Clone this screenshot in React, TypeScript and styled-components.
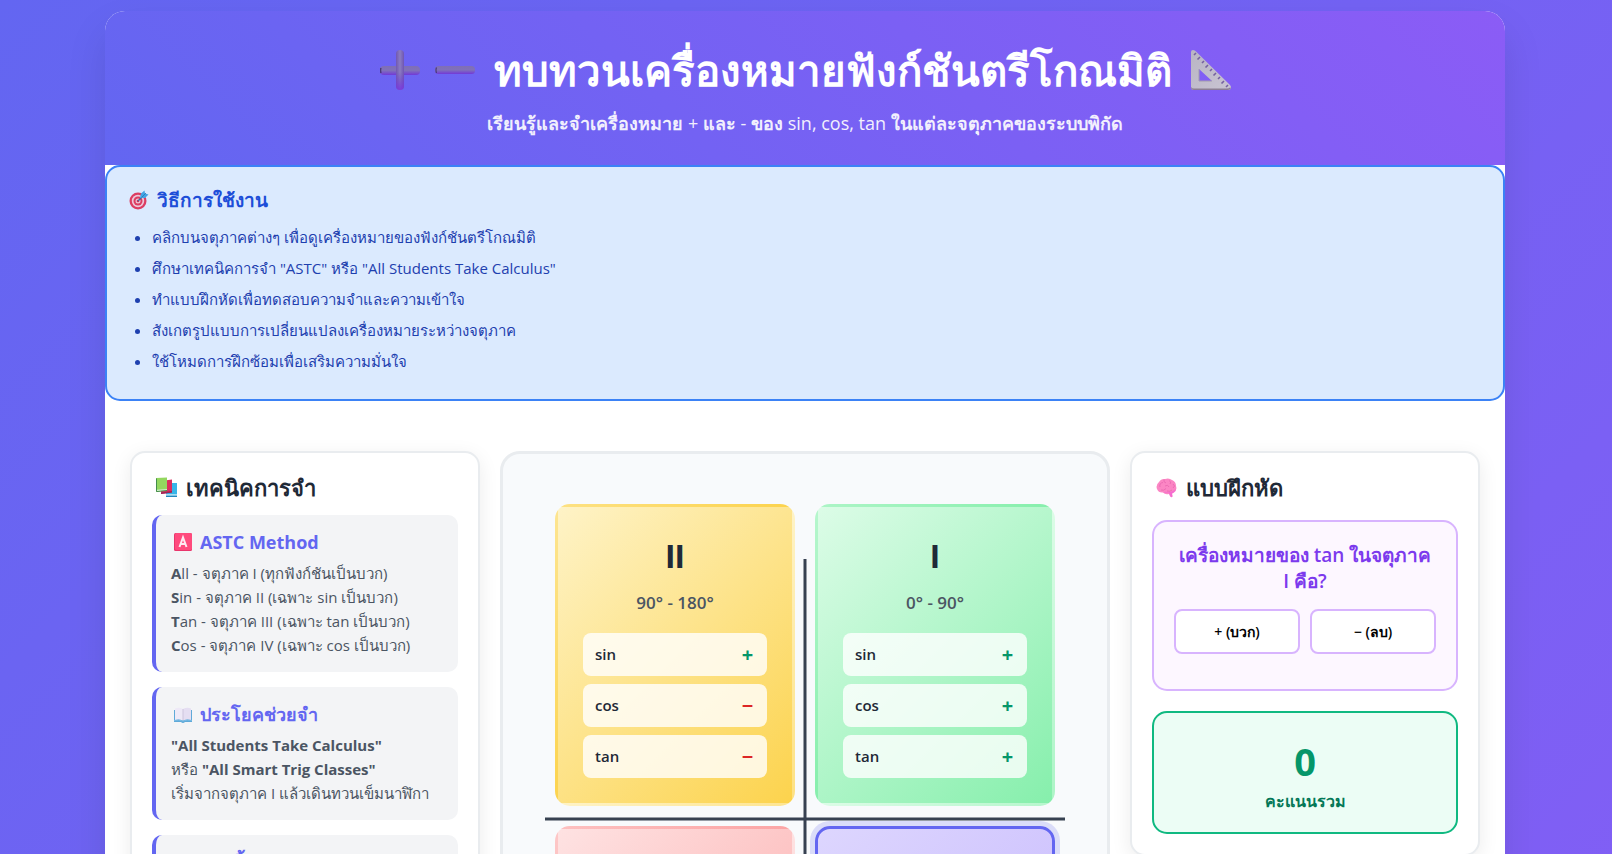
import React, { useState } from "react";
import styled, { createGlobalStyle } from "styled-components";

const GlobalStyle = createGlobalStyle`
  * { box-sizing: border-box; margin: 0; padding: 0; }
  body {
    font-family: "Open Sans", "Noto Sans", sans-serif;
    background: linear-gradient(135deg, #6366f1 0%, #8b5cf6 120%);
    color: #1f2937;
    padding: 11px 21px 11px 19px;
  }
`;

const Container = styled.div`
  max-width: 1400px;
  margin: 0 auto;
  background: #fff;
  border-radius: 20px;
  box-shadow: 0 20px 40px rgba(0, 0, 0, 0.1);
  overflow: hidden;
`;

const Header = styled.header`
  display: flex;
  flex-direction: column;
  align-items: center;
  padding: 30px 30px 27px;
  background: linear-gradient(45deg, #6366f1, #8b5cf6);
  color: #fff;
  text-align: center;
`;

const Title = styled.h1`
  display: flex;
  align-items: center;
  gap: 19px;
  font-size: 42px;
  line-height: 58px;
  font-weight: 700;
`;

const TitleSigns = styled.span`
  display: flex;
  gap: 15px;
`;

const Subtitle = styled.p`
  margin-top: 9px;
  font-size: 18px;
  line-height: 30px;
  font-weight: 600;
  opacity: 0.9;
`;

const Formula = styled.span`
  font-weight: 400;
`;

const Instructions = styled.section`
  padding: 20px 22px 22px;
  border: 2px solid #3b82f6;
  border-radius: 15px;
  background: #dbeafe;
  color: #1e40af;
`;

const InstructionsTitle = styled.h2`
  display: flex;
  align-items: center;
  gap: 8px;
  font-size: 19px;
  line-height: 26px;
  font-weight: 700;
  color: #1d4ed8;
`;

const InstructionList = styled.ul`
  margin-top: 9px;
  padding-left: 23px;
  font-size: 15px;
  line-height: 31px;
`;

const Main = styled.main`
  display: grid;
  grid-template-columns: 350px minmax(0, 1fr) 350px;
  align-items: start;
  gap: 20px;
  padding: 50px 25px 25px;
`;

const Card = styled.section`
  padding: 20px;
  border: 2px solid #e9ecef;
  border-radius: 15px;
  background: #fff;
  box-shadow: 0 5px 20px rgba(0, 0, 0, 0.08);
`;

const CardTitle = styled.h2<{ $space: number }>`
  display: flex;
  align-items: center;
  gap: 9px;
  margin-bottom: ${(p) => p.$space}px;
  padding-left: 4px;
  font-size: 22px;
  line-height: 28px;
  font-weight: 600;
`;

const MemoryList = styled.div`
  display: grid;
  gap: 15px;
`;

const MemoryBox = styled.article`
  padding: 15px;
  border-left: 4px solid #6366f1;
  border-radius: 10px;
  background: #f3f4f6;
  color: #4b5563;
  font-size: 15px;
  line-height: 24px;
`;

const MemoryTitle = styled.h3`
  display: flex;
  align-items: center;
  gap: 8px;
  margin-bottom: 7px;
  padding-left: 3px;
  font-size: 18px;
  line-height: 24px;
  font-weight: 700;
  color: #6366f1;
`;

const PlanePanel = styled.section`
  display: flex;
  justify-content: center;
  padding: 50px 20px;
  border: 3px solid #e9ecef;
  border-radius: 20px;
  background: #f8fafc;
`;

const Plane = styled.div`
  position: relative;
  display: grid;
  grid-template-columns: 1fr 1fr;
  grid-template-rows: auto 1fr;
  gap: 20px;
  width: 100%;
  max-width: 500px;
  min-height: 629px;
`;

const Axis = styled.span<{ $vertical?: boolean }>`
  position: absolute;
  top: 50%;
  left: 50%;
  width: ${(p) => (p.$vertical ? "3px" : "520px")};
  height: ${(p) => (p.$vertical ? "520px" : "3px")};
  background: #374151;
  transform: translate(-50%, -50%);
`;

const Quadrant = styled.button<{ $from: string; $to: string; $active: boolean }>`
  position: relative;
  display: flex;
  flex-direction: column;
  align-items: center;
  padding: 25px;
  border: 3px solid ${(p) => (p.$active ? "#6366f1" : "transparent")};
  border-radius: 15px;
  background: linear-gradient(135deg, ${(p) => p.$from}, ${(p) => p.$to});
  box-shadow: ${(p) => (p.$active ? "0 0 0 5px rgba(99, 102, 241, 0.2)" : "none")};
  font-family: inherit;
  color: #1f2937;
  cursor: pointer;
`;

const Numeral = styled.span`
  font-family: "Liberation Sans", sans-serif;
  font-size: 34px;
  line-height: 48px;
  font-weight: 700;
`;

const AngleRange = styled.span`
  margin: 8px 0 16px;
  font-size: 17px;
  line-height: 29px;
  font-weight: 600;
  color: #4b5563;
`;

const SignRows = styled.span`
  display: grid;
  gap: 8px;
  width: 100%;
`;

const SignRow = styled.span`
  display: flex;
  align-items: center;
  justify-content: space-between;
  padding: 8px 12px;
  border-radius: 8px;
  background: rgba(255, 255, 255, 0.8);
  font-size: 15px;
  line-height: 27px;
  font-weight: 600;
`;

const Sign = styled.span<{ $positive: boolean }>`
  width: 15px;
  font-size: 20px;
  font-weight: 700;
  text-align: center;
  color: ${(p) => (p.$positive ? "#059669" : "#dc2626")};
`;

const QuizBox = styled.div`
  min-height: 171px;
  padding: 20px;
  border: 2px solid #d8b4fe;
  border-radius: 15px;
  background: #fdf7ff;
`;

const Question = styled.p`
  margin-bottom: 15px;
  font-size: 19px;
  line-height: 26px;
  font-weight: 600;
  text-align: center;
  color: #7c3aed;
`;

const Answers = styled.div`
  display: grid;
  grid-template-columns: 1fr 1fr;
  gap: 10px;
`;

const AnswerButton = styled.button`
  padding: 10px;
  border: 2px solid #d8b4fe;
  border-radius: 8px;
  background: #fff;
  color: #000;
  font-family: inherit;
  font-size: 14px;
  line-height: 21px;
  font-weight: 600;
  cursor: pointer;
`;

const ScoreBox = styled.div`
  margin-top: 20px;
  padding: 20px;
  border: 2px solid #10b981;
  border-radius: 15px;
  background: #ecfdf5;
  text-align: center;
`;

const ScoreValue = styled.div`
  font-size: 38px;
  line-height: 57px;
  font-weight: 700;
  color: #059669;
`;

const ScoreLabel = styled.div`
  font-size: 16px;
  line-height: 22px;
  font-weight: 600;
  color: #047857;
`;

const PlusIcon = () => (
  <svg width="40" height="40" viewBox="0 0 40 40" aria-hidden="true">
    <defs>
      <linearGradient id="barH" x1="0" y1="0" x2="0" y2="1">
        <stop offset="0" stopColor="#7f6fb5" />
        <stop offset="0.5" stopColor="#8070bb" />
        <stop offset="1" stopColor="#7238d8" />
      </linearGradient>
      <linearGradient id="barV" x1="0" y1="0" x2="1" y2="0">
        <stop offset="0" stopColor="#7158b0" />
        <stop offset="0.5" stopColor="#8b7cc2" />
        <stop offset="1" stopColor="#6f55b2" />
      </linearGradient>
      <linearGradient id="barFade" x1="0" y1="0" x2="0" y2="1">
        <stop offset="0.55" stopColor="#6b35cf" stopOpacity="0" />
        <stop offset="1" stopColor="#7a35e0" stopOpacity="0.9" />
      </linearGradient>
    </defs>
    <rect x="0" y="16" width="40" height="9" rx="4" fill="url(#barH)" />
    <rect x="16" y="0" width="8" height="40" rx="4" fill="url(#barV)" />
    <rect x="16" y="0" width="8" height="40" rx="4" fill="url(#barFade)" />
    <path d="M1 18Q0 20 1 23" stroke="#493a78" strokeWidth="1.5" fill="none" />
  </svg>
);

const MinusIcon = () => (
  <svg width="40" height="40" viewBox="0 0 40 40" aria-hidden="true">
    <rect x="0" y="16" width="40" height="8" rx="3.5" fill="url(#barH)" />
    <path d="M1.5 17.5Q.5 20 1.5 23" stroke="#493a78" strokeWidth="1.2" fill="none" />
  </svg>
);

const SetSquareIcon = () => (
  <svg width="40" height="40" viewBox="0 0 40 40" aria-hidden="true">
    <defs>
      <linearGradient id="square" x1="0" y1="0" x2="1" y2="1">
        <stop offset="0" stopColor="#b9b4c4" />
        <stop offset="1" stopColor="#c9c5d3" />
      </linearGradient>
    </defs>
    <path
      fillRule="evenodd"
      d="M0 2Q0 0 2 0Q4 0 5 1.5L39 35Q40 36 40 38Q39.500 40 37 40H3Q0 40 0 37ZM8 19V31H21Z"
      fill="url(#square)"
    />
    <path d="M0 37Q0 40 3 40H37Q39 40 40 38L39 37.500Q38 38.500 36 38.500H3Q1 38.500 0 37Z" fill="#8b7f94" />
    <path d="M8 19V31H21" fill="none" stroke="#a29cae" strokeWidth="1" />
    <path
      d="M5 3L3 5M9 7L6.500 9.500M13 11L11 13M17 15L14.500 17.500M21 19L19 21M25 23L22.500 25.500M29 27L27 29M33 31L30.500 33.500M37 35L35 37"
      stroke="#75619f"
      strokeWidth="1.600"
    />
  </svg>
);

const TargetIcon = () => (
  <svg width="20" height="20" viewBox="0 0 20 20" aria-hidden="true">
    <circle cx="9" cy="11" r="8.500" fill="#dc3d62" />
    <circle cx="9" cy="11" r="6.200" fill="#ecc8da" />
    <circle cx="9" cy="11" r="4.500" fill="#dc3d62" />
    <circle cx="9" cy="11" r="2.500" fill="#f0c5d4" />
    <circle cx="9" cy="11" r="1.300" fill="#cf3159" />
    <path d="M9 11L14 6" stroke="#3c6c9e" strokeWidth="1.300" />
    <path d="M11 8L12 3.500L15.500 .5L16 3.500L19.500 4.500L16 8Z" fill="#43a5e4" />
    <path d="M12.500 7.500L17 3" stroke="#2775b5" strokeWidth="0.800" />
  </svg>
);

const BooksIcon = () => (
  <svg width="21" height="21" viewBox="0 0 21 21" aria-hidden="true">
    <path d="M10 6H21V20H10Z" fill="#37b5e8" />
    <path d="M10 18.500H21V20H10Z" fill="#2386bd" />
    <path d="M10 17.300H21V18.500H10Z" fill="#d8eef8" />
    <path d="M5 4L16 2.500V15.500L5 17Z" fill="#dc2d5e" />
    <path d="M5 15.500L16 14V15.500L5 17Z" fill="#9b2857" />
    <path d="M0 1L11 .5V13L1 15Q0 15 0 14Z" fill="#93d75f" />
    <path d="M0 2V14Q0 15 1 15L11 14V12.500L1 13.500V1Z" fill="#448c4d" />
    <path d="M1 12.800L11 12V13L1 14Z" fill="#d7efd1" />
  </svg>
);

const LetterIcon = () => (
  <svg width="18" height="18" viewBox="0 0 18 18" aria-hidden="true">
    <rect width="18" height="18" rx="1.500" fill="#e9356c" />
    <rect x="1" width="17" height="17" rx="1.500" fill="#ff4a7d" />
    <path d="M5.500 14L9 4.500L12.500 14M6.800 11H11.200" fill="none" stroke="#ffe9f1" strokeWidth="2" />
  </svg>
);

const OpenBookIcon = () => (
  <svg width="18" height="18" viewBox="0 0 18 18" aria-hidden="true">
    <path d="M0 5H18V17H11Q9 19 7 17H0Z" fill="#5fa9d8" />
    <path d="M1 3.500Q5 2 9 4V15.500Q5 14 1 15Z" fill="#eee9f7" />
    <path d="M17 3.500Q13 2 9 4V15.500Q13 14 17 15Z" fill="#e5def2" />
    <path d="M9 4V16" stroke="#cdc4dc" strokeWidth="1" />
    <path d="M0 15.500Q5 14.500 9 16Q13 14.500 18 15.500" fill="none" stroke="#78bce5" strokeWidth="1" />
  </svg>
);

const BrainIcon = () => (
  <svg width="21" height="21" viewBox="0 0 21 21" aria-hidden="true">
    <path
      d="M1 12Q-.5 8 3 5Q5 1.500 9 2Q13 .5 16 3Q20 4.500 20 9Q21.500 13 18 15.500Q17 16.500 16 16.500L16.500 19.500Q15 21 14 19L13 17Q9 18 7 15.500Q2.500 16 1 12Z"
      fill="#fb86c4"
    />
    <path
      d="M4 10Q3 6 7 5.500M8 2.500Q7 5 10 6M9 9Q12 7 13 10M13 3.500Q16 5 14 7M17 7Q20 9 17 11M5 13Q8 14 10 11.500M11 14Q14 15 16 13"
      fill="none"
      stroke="#e766b0"
      strokeWidth="0.800"
    />
    <path d="M7 15.500Q10 14 13 16L14 19Q15 21 16.500 19.500L16 16.500Q19 15 20 12Q15 16 7 15.500Z" fill="#f35fd6" opacity="0.7" />
  </svg>
);

const CycleIcon = () => (
  <svg width="18" height="18" viewBox="0 0 18 18" aria-hidden="true">
    <rect y="1" width="18" height="17" rx="2" fill="#3aa0e0" />
    <path d="M4 9A5 5 0 0 1 13 6M14 10A5 5 0 0 1 5 13" fill="none" stroke="#fff" strokeWidth="2" />
  </svg>
);

const quadrants = [
  { id: "II", range: "90° - 180°", from: "#fef3c7", to: "#fcd34d", signs: [true, false, false] },
  { id: "I", range: "0° - 90°", from: "#dcfce7", to: "#86efac", signs: [true, true, true] },
  { id: "III", range: "180° - 270°", from: "#fee2e2", to: "#fca5a5", signs: [false, false, true] },
  { id: "IV", range: "270° - 360°", from: "#ddd6fe", to: "#c4b5fd", signs: [false, true, false] },
];

const functions = ["sin", "cos", "tan"];

export default function App() {
  const [active, setActive] = useState("IV");
  const [score, setScore] = useState(0);

  return (
    <>
      <GlobalStyle />
      <Container>
        <Header>
          <Title>
            <TitleSigns>
              <PlusIcon />
              <MinusIcon />
            </TitleSigns>
            ทบทวนเครื่องหมายฟังก์ชันตรีโกณมิติ
            <SetSquareIcon />
          </Title>
          <Subtitle>
            เรียนรู้และจำเครื่องหมาย <Formula>+</Formula> และ <Formula>-</Formula> ของ{" "}
            <Formula>sin, cos, tan</Formula> ในแต่ละจตุภาคของระบบพิกัด
          </Subtitle>
        </Header>

        <Instructions>
          <InstructionsTitle>
            <TargetIcon />
            วิธีการใช้งาน
          </InstructionsTitle>
          <InstructionList>
            <li>คลิกบนจตุภาคต่างๆ เพื่อดูเครื่องหมายของฟังก์ชันตรีโกณมิติ</li>
            <li>ศึกษาเทคนิคการจำ "ASTC" หรือ "All Students Take Calculus"</li>
            <li>ทำแบบฝึกหัดเพื่อทดสอบความจำและความเข้าใจ</li>
            <li>สังเกตรูปแบบการเปลี่ยนแปลงเครื่องหมายระหว่างจตุภาค</li>
            <li>ใช้โหมดการฝึกซ้อมเพื่อเสริมความมั่นใจ</li>
          </InstructionList>
        </Instructions>

        <Main>
          <Card>
            <CardTitle $space={14}>
              <BooksIcon />
              เทคนิคการจำ
            </CardTitle>
            <MemoryList>
              <MemoryBox>
                <MemoryTitle>
                  <LetterIcon />
                  ASTC Method
                </MemoryTitle>
                <p><strong>A</strong>ll - จตุภาค I (ทุกฟังก์ชันเป็นบวก)</p>
                <p><strong>S</strong>in - จตุภาค II (เฉพาะ sin เป็นบวก)</p>
                <p><strong>T</strong>an - จตุภาค III (เฉพาะ tan เป็นบวก)</p>
                <p><strong>C</strong>os - จตุภาค IV (เฉพาะ cos เป็นบวก)</p>
              </MemoryBox>
              <MemoryBox>
                <MemoryTitle>
                  <OpenBookIcon />
                  ประโยคช่วยจำ
                </MemoryTitle>
                <p><strong>"All Students Take Calculus"</strong></p>
                <p>หรือ <strong>"All Smart Trig Classes"</strong></p>
                <p>เริ่มจากจตุภาค I แล้วเดินทวนเข็มนาฬิกา</p>
              </MemoryBox>
              <MemoryBox>
                <MemoryTitle>
                  <CycleIcon />
                  การขึ้นลง
                </MemoryTitle>
                <p>sin เป็นบวกในจตุภาค I และ II</p>
                <p>cos เป็นบวกในจตุภาค I และ IV</p>
                <p>tan เป็นบวกในจตุภาค I และ III</p>
              </MemoryBox>
            </MemoryList>
          </Card>

          <PlanePanel>
            <Plane>
              <Axis />
              <Axis $vertical />
              {quadrants.map((q) => (
                <Quadrant
                  key={q.id}
                  $from={q.from}
                  $to={q.to}
                  $active={active === q.id}
                  onClick={() => setActive(q.id)}
                >
                  <Numeral>{q.id}</Numeral>
                  <AngleRange>{q.range}</AngleRange>
                  <SignRows>
                    {functions.map((name, i) => (
                      <SignRow key={name}>
                        {name}
                        <Sign $positive={q.signs[i]}>{q.signs[i] ? "+" : "−"}</Sign>
                      </SignRow>
                    ))}
                  </SignRows>
                </Quadrant>
              ))}
            </Plane>
          </PlanePanel>

          <Card>
            <CardTitle $space={19}>
              <BrainIcon />
              แบบฝึกหัด
            </CardTitle>
            <QuizBox>
              <Question>เครื่องหมายของ tan ในจตุภาค I คือ?</Question>
              <Answers>
                <AnswerButton onClick={() => setScore(score + 1)}>+ (บวก)</AnswerButton>
                <AnswerButton>− (ลบ)</AnswerButton>
              </Answers>
            </QuizBox>
            <ScoreBox>
              <ScoreValue>{score}</ScoreValue>
              <ScoreLabel>คะแนนรวม</ScoreLabel>
            </ScoreBox>
          </Card>
        </Main>
      </Container>
    </>
  );
}
